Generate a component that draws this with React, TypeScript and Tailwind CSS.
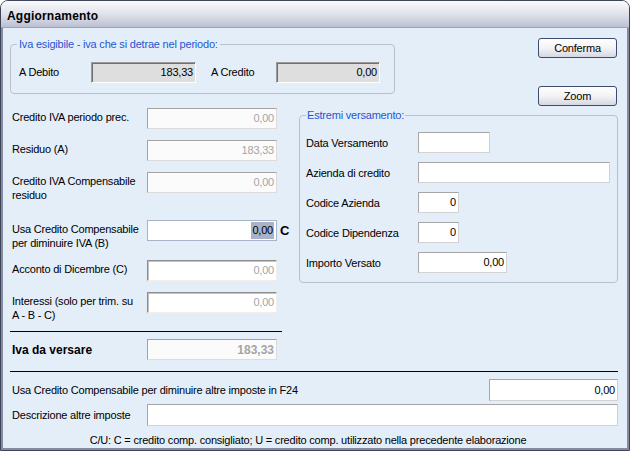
import React from 'react';

const kinds = {
  gray: "bg-[#dedede] border border-t-[#9a9a9a] border-l-[#9a9a9a] border-r-white border-b-white shadow-[inset_1px_1px_0_#707070] text-black",
  dis: "bg-[#fbfbfb] border border-t-[#a3a3a3] border-l-[#a3a3a3] border-r-[#dcdcdc] border-b-[#dcdcdc] text-[#a5a5a5]",
  sunk: "bg-white border border-t-[#8c8c8c] border-l-[#8c8c8c] border-r-[#f2efe6] border-b-[#f2efe6] shadow-[inset_1px_1px_0_#c4c4c4] text-[#a5a5a5]",
  sel: "bg-white border border-[#a7b3c6] text-black",
  plain: "bg-white border border-t-[#a6a6a6] border-l-[#a6a6a6] border-r-[#d2d2d2] border-b-[#d2d2d2] text-black",
};

function Field({ kind, className, children }: { kind: keyof typeof kinds; className: string; children?: React.ReactNode }) {
  return (
    <div className={`shrink-0 flex items-center justify-end pr-[2px] ${kinds[kind]} ${className}`}>
      {children}
    </div>
  );
}

function Btn({ children }: { children: React.ReactNode }) {
  return (
    <div className="w-[79px] h-[20px] rounded-[3px] border border-[#3d4c6c] bg-gradient-to-b from-white via-[#f3f3f6] to-[#d6d8e2] flex items-center justify-center">
      {children}
    </div>
  );
}

function LeftRow({ h, label, kind, value, extra }: { h: string; label: React.ReactNode; kind: keyof typeof kinds; value: React.ReactNode; extra?: React.ReactNode }) {
  return (
    <div className={`flex items-start ${h}`}>
      <div className="w-[137px] shrink-0 pl-[2px] pt-[2px] leading-[14px]">{label}</div>
      <Field kind={kind} className="w-[130px] h-[21px]">{value}</Field>
      {extra}
    </div>
  );
}

function RightRow({ label, w, value }: { label: string; w: string; value?: string }) {
  return (
    <div className="flex items-start h-[30px]">
      <div className="w-[112px] shrink-0 pt-[4px] leading-[14px]">{label}</div>
      <Field kind="plain" className={`h-[21px] ${w}`}>{value}</Field>
    </div>
  );
}

export default function App() {
  return (
    <div className="w-[630px] h-[451px] flex flex-col border border-[#3f4559] rounded-t-[8px] overflow-hidden font-['Liberation_Sans',Arial,sans-serif] text-[11px] text-black tracking-[-0.2px]">
      <div className="h-[27px] shrink-0 flex items-center pl-[6px] pt-[3px] bg-gradient-to-b from-[#fbfbfd] via-[#e0e2ea] to-[#bcc0d2] border-b border-[#9ea3b8]">
        <span className="text-[12px] font-bold tracking-[0.2px]">Aggiornamento</span>
      </div>

      <div className="flex-1 flex flex-col bg-[#e4eef9] border-x-2 border-b-2 border-[#868ba2]">
        {/* top: iva esigibile + buttons */}
        <div className="flex items-start h-[78px] shrink-0">
          <fieldset className="ml-[7px] mt-[10px] w-[385px] border border-[#b9c0cc] rounded-[4px] px-[6px] pb-[10px]">
            <legend className="px-[2px] text-[#1f56d4] leading-[13px]">Iva esigibile - iva che si detrae nel periodo:</legend>
            <div className="flex items-center mt-[11px] ml-[2px]">
              <span className="w-[72px] shrink-0">A Debito</span>
              <Field kind="gray" className="w-[105px] h-[21px]">183,33</Field>
              <span className="ml-[15px] w-[65px] shrink-0">A Credito</span>
              <Field kind="gray" className="w-[104px] h-[21px]">0,00</Field>
            </div>
          </fieldset>
          <div className="ml-auto mr-[10px] mt-[10px] flex flex-col gap-[28px]">
            <Btn>Conferma</Btn>
            <Btn>Zoom</Btn>
          </div>
        </div>

        {/* middle */}
        <div className="flex items-start shrink-0">
          <div className="ml-[7px] w-[272px] shrink-0 flex flex-col pt-[2px]">
            <LeftRow h="h-[32px]" label="Credito IVA periodo prec." kind="dis" value="0,00" />
            <LeftRow h="h-[32px]" label="Residuo (A)" kind="dis" value="183,33" />
            <LeftRow h="h-[48px]" label={<>Credito IVA Compensabile<br />residuo</>} kind="dis" value="0,00" />
            <LeftRow
              h="h-[40px]"
              label={<>Usa Credito Compensabile<br />per diminuire IVA (B)</>}
              kind="sel"
              value={<span className="bg-[#a9b2c8] px-[1px]">0,00</span>}
              extra={<span className="ml-[3px] shrink-0 text-[13px] font-bold leading-[21px]">C</span>}
            />
            <LeftRow h="h-[32px]" label="Acconto di Dicembre (C)" kind="sunk" value="0,00" />
            <LeftRow h="h-[39px]" label={<>Interessi (solo per trim. su<br />A - B - C)</>} kind="sunk" value="0,00" />
            <div className="border-t border-black" />
            <div className="flex items-center mt-[7px]">
              <div className="w-[137px] shrink-0 pl-[2px] text-[12px] font-bold tracking-normal">Iva da versare</div>
              <Field kind="dis" className="w-[130px] h-[21px] font-bold text-[12px] tracking-normal">183,33</Field>
            </div>
          </div>

          <fieldset className="ml-[17px] mt-[3px] w-[319px] border border-[#b9c0cc] rounded-[4px] pl-[6px]">
            <legend className="px-[1px] text-[#1f56d4] leading-[13px]">Estremi versamento:</legend>
            <div className="flex flex-col pt-[10px]">
              <RightRow label="Data Versamento" w="w-[72px]" />
              <RightRow label="Azienda di credito" w="w-[192px]" />
              <RightRow label="Codice Azienda" w="w-[41px]" value="0" />
              <RightRow label="Codice Dipendenza" w="w-[41px]" value="0" />
              <RightRow label="Importo Versato" w="w-[89px]" value="0,00" />
            </div>
          </fieldset>
        </div>

        {/* bottom */}
        <div className="ml-[7px] w-[608px] mt-[11px] border-t border-black shrink-0" />
        <div className="flex items-center mt-[7px] shrink-0">
          <span className="ml-[9px]">Usa Credito Compensabile per diminuire altre imposte in F24</span>
          <Field kind="plain" className="ml-auto mr-[9px] w-[129px] h-[22px]">0,00</Field>
        </div>
        <div className="flex items-center mt-[3px] shrink-0">
          <span className="ml-[9px] w-[135px] shrink-0">Descrizione altre imposte</span>
          <Field kind="plain" className="w-[471px] h-[22px]" />
        </div>
        <div className="mt-[7px] leading-[14px] text-center pr-[14px]">
          C/U: C = credito comp. consigliato; U = credito comp. utilizzato nella precedente elaborazione
        </div>
      </div>
    </div>
  );
}
